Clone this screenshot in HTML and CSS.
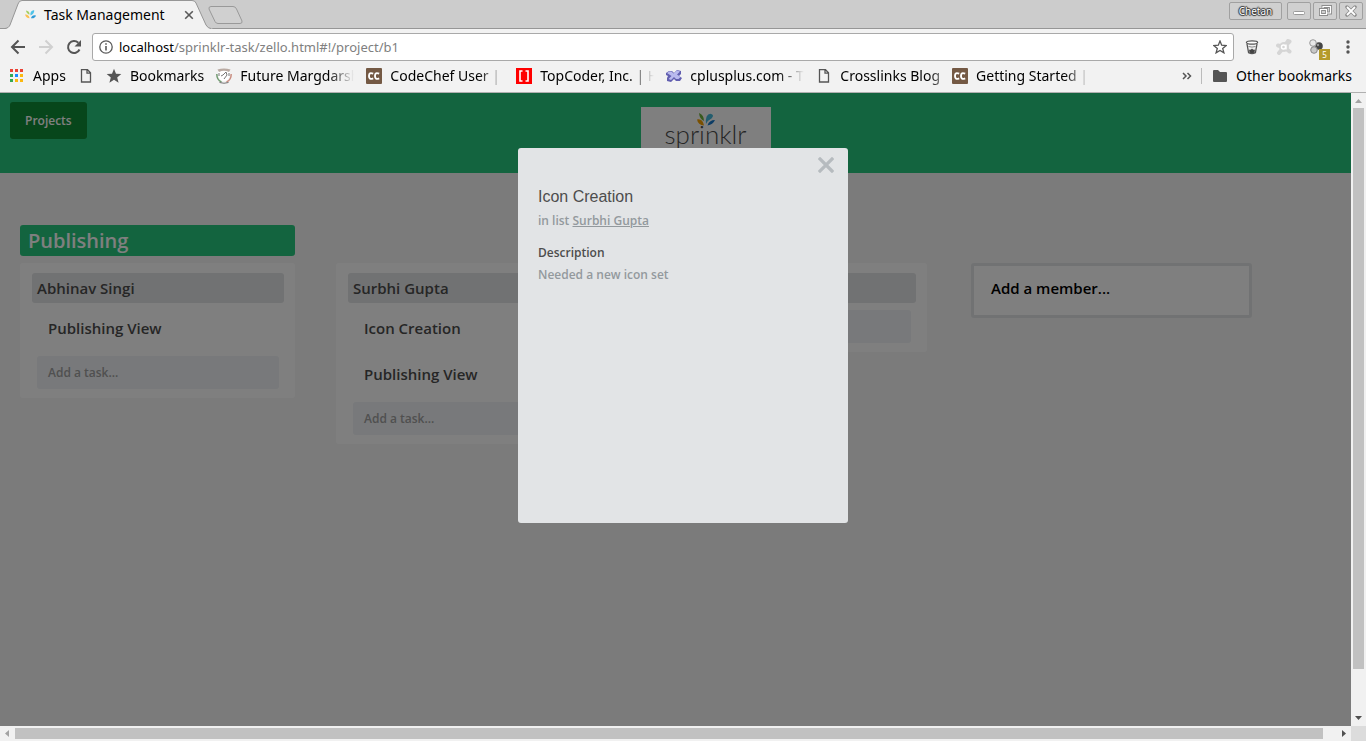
FILE: index.html
```
<!DOCTYPE html>
<html lang="en">
<head>
<meta charset="utf-8">
<title>Task Management</title>
<link rel="stylesheet" href="styles.css">
</head>
<body>
<div class="tabstrip">
  <div class="tab">
    <svg class="tab-shape" viewBox="0 0 208 29" preserveAspectRatio="none" aria-hidden="true"><path d="M0 29 C3 28 4 27 5 25 L13 4 Q14 .5 17 .5 L187 .5 Q190 .5 191 3 L201 25 Q203 28.500 206 28.500 L208 29Z" fill="#f2f2f2"/><path d="M0 28.500 C3 28 4 27 5 25 L13 4 Q14 .5 17 .5 L187 .5 Q190 .5 191 3 L201 25 Q203 28.500 206 28.500" fill="none" stroke="#969696"/></svg>
    <svg class="tab-icon" viewBox="0 0 12 12" aria-hidden="true"><path d="M1 1.500Q5 2 5 6Q2 5.500 1 1.500" fill="#a3cf62"/><path d="M0 6q4-.5 5 4q-4 0-5-4" fill="#fbc04f"/><path d="M6 7Q5 2 10 1q.5 4-4 6" fill="#4fc3e8"/><path d="M6.500 10q1-4 5.500-3q-1 3.500-5.500 3" fill="#2f9bd8"/></svg>
    <span class="tab-title">Task Management</span>
    <button class="tab-close" aria-label="Close tab"><svg width="10" height="10" viewBox="0 0 10 10"><path d="M1.200 1.200 8.800 8.800M8.800 1.200 1.200 8.800" stroke="#5a5a5a" stroke-width="1.600"/></svg></button>
  </div>
  <button class="new-tab" aria-label="New tab"><svg width="36" height="18" viewBox="0 0 36 18"><path d="M3 .5H25Q27.500 .5 28.500 3L34 15Q34.500 17.500 32 17.500H10Q8 17.500 7 15.500L1 3Q.5.5 3 .5Z" fill="#d0d0d0" stroke="#999"/></svg></button>
  <div class="window-controls">
    <button class="user">Chetan</button>
    <button class="win" aria-label="Minimise"><svg width="14" height="12" viewBox="0 0 14 12"><rect x="1.500" y="6.500" width="11" height="3" rx="1" fill="#fff" stroke="#999"/></svg></button>
    <button class="win" aria-label="Restore"><svg width="14" height="12" viewBox="0 0 14 12" fill="none"><path d="M5 3V1.500H12.500V8H9" stroke="#8c8c8c" stroke-width="3"/><path d="M2.500 4.500h6v5h-6z" stroke="#8c8c8c" stroke-width="3"/><path d="M5 3V1.500H12.500V8H9M2.500 4.500h6v5h-6z" stroke="#fff" stroke-width="1.200"/></svg></button>
    <button class="win" aria-label="Close"><svg width="14" height="12" viewBox="0 0 14 12"><path d="M3 2l8 8M11 2l-8 8" stroke="#8c8c8c" stroke-width="3.500" stroke-linecap="round"/><path d="M3 2l8 8M11 2l-8 8" stroke="#fff" stroke-width="1.800"/></svg></button>
  </div>
</div>
<div class="toolbar">
  <div class="nav">
    <button class="icon" aria-label="Back"><svg width="16" height="16" viewBox="0 0 16 16"><path d="M15 8H2.500M8.500 1.500 2 8l6.500 6.500" fill="none" stroke="#555" stroke-width="2"/></svg></button>
    <button class="icon" aria-label="Forward"><svg width="16" height="16" viewBox="0 0 16 16"><path d="M1 8h12.500M7.500 1.500 14 8l-6.500 6.500" fill="none" stroke="#d0d0d0" stroke-width="2"/></svg></button>
    <button class="icon" aria-label="Reload"><svg width="16" height="16" viewBox="0 0 16 16"><path d="M13.500 10.500A6 6 0 1 1 12.300 3.800" fill="none" stroke="#555" stroke-width="2"/><path d="M15 1v6.500H8.500z" fill="#555"/></svg></button>
  </div>
  <div class="omnibox">
    <svg width="14" height="14" viewBox="0 0 14 14" aria-hidden="true"><circle cx="7" cy="7" r="6.200" fill="none" stroke="#5a5a5a" stroke-width="1.300"/><path d="M7 6v4.500M7 3.200v1.600" stroke="#5a5a5a" stroke-width="1.600"/></svg>
    <div class="url">localhost<span>/sprinklr-task/zello.html#!/project/b1</span></div>
    <button class="icon" aria-label="Bookmark this page"><svg width="14" height="14" viewBox="0 0 14 14"><path d="M7 1l1.700 4.200 4.500.3-3.500 2.900 1.200 4.400L7 10.400l-3.900 2.400 1.200-4.400L.8 5.500l4.500-.3z" fill="none" stroke="#555" stroke-width="1.300"/></svg></button>
  </div>
  <div class="extensions">
    <button class="icon" aria-label="Bucket extension"><svg width="16" height="16" viewBox="0 0 16 16"><path d="M3 5l1.600 8.700q3.400 1.600 6.800 0L13 5" fill="#f2f2f2" stroke="#555" stroke-width="1.300"/><ellipse cx="8" cy="3.500" rx="5.600" ry="1.700" fill="#fff" stroke="#555" stroke-width="1.300"/><path d="M4.500 7.500q3.500 1.200 7 0" fill="none" stroke="#888"/><path d="M5 10.500q1.500 1 3-1 1.500 2 3 1l-.5 3q-2.500 1-5 0z" fill="#444"/></svg></button>
    <button class="icon" aria-label="Safety extension"><svg width="16" height="16" viewBox="0 0 16 16"><path d="M8 8L13.500 2.500M8 8L2 6.500M8 8l5.500 4.500M8 8l-5 6M8 8l4-6" stroke="#d5d5d5" stroke-width="4" stroke-linecap="round"/><circle cx="8" cy="8" r="5" fill="#d5d5d5"/><circle cx="7.500" cy="8" r="2" fill="none" stroke="#fff" stroke-width="1.400"/><path d="M10 5.500v5" stroke="#fff" stroke-width="1.400"/></svg></button>
    <button class="icon badge-host" aria-label="Ball extension"><svg width="16" height="16" viewBox="0 0 16 16"><circle cx="11" cy="7" r="3.800" fill="#454545"/><circle cx="5" cy="4" r="3.300" fill="#e8e8e8" stroke="#999"/><circle cx="6" cy="11" r="3.300" fill="#c8c8c8" stroke="#888"/><circle cx="10" cy="6" r="1.200" fill="#999"/></svg><span class="badge">5</span></button>
    <button class="icon" aria-label="Menu"><svg width="16" height="16" viewBox="0 0 16 16" fill="#555"><circle cx="8" cy="3" r="1.700"/><circle cx="8" cy="8" r="1.700"/><circle cx="8" cy="13" r="1.700"/></svg></button>
  </div>
</div>
<nav class="bookmarks">
  <a href="#apps"><svg viewBox="0 0 16 16"><path d="M1 1h3v3H1zM6 1h3v3H6zM11 1h3v3h-3z" fill="#ea4335"/><path d="M1 6h3v3H1zM1 11h3v3H1z" fill="#34a853"/><path d="M6 6h3v3H6z" fill="#1a8cff"/><path d="M11 6h3v3h-3zM6 11h3v3H6zM11 11h3v3h-3z" fill="#fbb80f"/></svg><span>Apps</span></a>
  <a href="#page" aria-label="Untitled page"><svg viewBox="0 0 16 16"><path d="M3.500 1.700h6l3 3V14h-9zM9 1.700V5.200h3.500" fill="none" stroke="#555" stroke-width="1.300"/></svg></a>
  <a href="#bookmarks"><svg viewBox="0 0 16 16"><path d="M8 .8l2 5 5.300.3-4.100 3.400 1.400 5.200L8 11.800l-4.600 2.900 1.400-5.200L.7 6.100 6 5.800z" fill="#555"/></svg><span>Bookmarks</span></a>
  <a href="#future"><svg viewBox="0 0 16 16"><path d="M2 4q0 9 6 9t6-9l-2-2H4z" fill="#fff"/><path d="M1.500 1.500Q8-.5 14.500 1.500L13 4Q8 1.500 3 4z" fill="#b9aaa2"/><path d="M.8 6q0 6 4.700 8" fill="none" stroke="#719a70" stroke-width="1.500"/><path d="M15.200 6q0 6-4.700 8" fill="none" stroke="#c98d80" stroke-width="1.500"/><path d="M5 8l2-1 3-3 1 3-3 4M3.500 14.500q4.500 1.500 9 0M3 5v3M13 5v3" fill="none" stroke="#777"/></svg><span>Future Margdarshan</span></a>
  <a href="#codechef"><svg viewBox="0 0 16 16"><rect width="16" height="16" rx="1" fill="#745944"/><path d="M7.200 5.700Q3 3.800 3 8t4.200 2.300M13.200 5.700Q9 3.800 9 8t4.200 2.300" fill="none" stroke="#fff" stroke-width="1.900"/></svg><span>CodeChef User | CodeChef</span></a>
  <a href="#topcoder"><svg viewBox="0 0 16 16"><path d="M0 0h16v16H0z" fill="#f00"/><path d="M6.500 3H4v10h2.500M9.500 3H12v10H9.500" fill="none" stroke="#fff" stroke-width="1.600"/></svg><span>TopCoder, Inc. | Home</span></a>
  <a href="#cplusplus"><svg viewBox="0 0 16 16"><path d="M0 5l3-2h3l2 2 3-3 4 1v3l-2 2 3 2-2 3h-4l-2-2-3 3-4-1v-3l1-2-2-1z" fill="#625fb0"/><path d="M1 5l2-1.500h2.500l2 2L11 2.500l3 1-3 3 3.500 2.500-2 2H10L8 9l-3 3-2.500-1 3-3z" fill="#b9b9ee"/></svg><span>cplusplus.com - The C++</span></a>
  <a href="#crosslinks"><svg viewBox="0 0 16 16"><path d="M3.500 1.700h6l3 3V14h-9zM9 1.700V5.200h3.500" fill="none" stroke="#555" stroke-width="1.300"/></svg><span>Crosslinks Blog</span></a>
  <a href="#started"><svg viewBox="0 0 16 16"><rect width="16" height="16" rx="1" fill="#745944"/><path d="M7.200 5.700Q3 3.800 3 8t4.200 2.300M13.200 5.700Q9 3.800 9 8t4.200 2.300" fill="none" stroke="#fff" stroke-width="1.900"/></svg><span>Getting Started | Code</span></a>
  <div class="bookmarks-end">
    <button class="icon" aria-label="More bookmarks"><svg width="10" height="8" viewBox="0 0 10 8"><path d="M1 1l3 3-3 3M5.500 1l3 3-3 3" fill="none" stroke="#555" stroke-width="1.500"/></svg></button>
    <a class="other" href="#other"><svg viewBox="0 0 16 16"><path d="M1 3q0-1 1-1h4l2 2h6q1 0 1 1v8q0 1-1 1H2q-1 0-1-1z" fill="#555"/></svg><span>Other bookmarks</span></a>
  </div>
</nav>
<div class="viewport">
  <div class="page">
    <header class="header">
      <button class="projects">Projects</button>
      <div class="logo">
        <svg width="18" height="14" viewBox="0 0 18 14" aria-hidden="true"><path d="M2 0Q7 2 7 8Q2.500 6 2 0" fill="#6fb33b"/><path d="M0 6.500Q5.500 5 7 12.500Q1 12 0 6.500" fill="#f5a000"/><path d="M9 11Q8 1 13.500 .8Q18 2 14.500 5.500Q11 7 9 11" fill="#46badc"/><path d="M10.500 12.500Q12 7 18 7Q16 11.500 10.500 12.500" fill="#1878ca"/></svg>
        <span class="wordmark">sprinklr</span>
      </div>
    </header>
    <main class="board">
      <h1 class="board-title">Publishing</h1>
      <div class="columns">
        <section class="card">
          <h2 class="member">Abhinav Singi</h2>
          <ul class="tasks"><li>Publishing View</li></ul>
          <button class="add-task">Add a task...</button>
        </section>
        <section class="card">
          <h2 class="member">Surbhi Gupta</h2>
          <ul class="tasks"><li>Icon Creation</li><li>Publishing View</li></ul>
          <button class="add-task">Add a task...</button>
        </section>
        <section class="card">
          <h2 class="member"></h2>
          <ul class="tasks"></ul>
          <button class="add-task" aria-label="Add a task"></button>
        </section>
        <button class="add-member">Add a member...</button>
      </div>
    </main>
    <div class="overlay">
      <div class="dialog" role="dialog" aria-labelledby="task-title">
        <button class="close" aria-label="Close"><svg width="16" height="16" viewBox="0 0 16 16"><path d="M2 2l12 12M14 2L2 14" stroke="#b6bbbf" stroke-width="3.200" stroke-linecap="square"/></svg></button>
        <h2 class="task-title" id="task-title">Icon Creation</h2>
        <p class="muted">in list <a href="#list">Surbhi Gupta</a></p>
        <h3 class="label">Description</h3>
        <p class="muted">Needed a new icon set</p>
      </div>
    </div>
  </div>
  <div class="scroll-y">
    <svg viewBox="0 0 15 15"><path d="M4 10h7L7.500 6z" fill="#a3a3a3"/></svg>
    <div class="track"><div class="thumb"></div></div>
    <svg viewBox="0 0 15 15"><path d="M4 5h7L7.500 9z" fill="#505050"/></svg>
  </div>
  <div class="scroll-x">
    <svg viewBox="0 0 15 15"><path d="M9 4v7L5 7.500z" fill="#a3a3a3"/></svg>
    <div class="track"><div class="thumb"></div></div>
    <svg viewBox="0 0 15 15"><path d="M6 4v7l4-3.500z" fill="#505050"/></svg>
  </div>
  <div class="corner"></div>
</div>
</body>
</html>
```
FILE: styles.css
```
* { box-sizing: border-box; }
body {
  margin: 0;
  height: 100vh;
  display: flex;
  flex-direction: column;
  overflow: hidden;
  font-family: "Noto Sans", sans-serif;
  font-size: 14px;
  color: #000;
}
button { margin: 0; padding: 0; border: 0; background: none; font: inherit; color: inherit; }
h1, h2, h3, p, ul { margin: 0; padding: 0; }
svg { display: block; flex: none; }
.icon { display: flex; flex: none; }

/* Tab strip */
.tabstrip {
  display: flex;
  flex: none;
  height: 29px;
  padding: 0 3px 0 5px;
  background: #ccc;
  box-shadow: inset 0 -1px #969696;
}
.tab {
  position: relative;
  display: flex;
  align-items: center;
  width: 208px;
  padding: 0 19px 0 20px;
}
.tab > * { position: relative; }
.tab > .tab-shape { position: absolute; inset: 0; width: 100%; height: 100%; }
.tab-icon { width: 11px; height: 11px; }
.tab-title { flex: 1; margin-left: 8px; line-height: 20px; white-space: nowrap; }
.tab-close { display: flex; }
.new-tab { align-self: center; margin-left: -5px; }
.window-controls { display: flex; align-items: flex-start; gap: 2px; margin-left: auto; padding-top: 2px; }
.user, .win {
  height: 18px;
  display: flex;
  align-items: center;
  justify-content: center;
  border: 1px solid #a0a0a0;
  border-radius: 2px;
  background: #d0d0d0;
}
.user {
  width: 53px;
  margin-right: 3px;
  font-size: 10px;
  color: #fff;
  text-shadow: 0 0 1px #333, 1px 0 1px #333, -1px 0 1px #333, 0 1px 1px #333, 0 -1px 1px #333;
}
.win { width: 24px; }

/* Toolbar */
.toolbar {
  display: flex;
  flex: none;
  align-items: center;
  gap: 10px;
  height: 33px;
  padding: 2px 10px 0;
  background: #f2f2f2;
}
.nav { display: flex; gap: 12px; }
.omnibox {
  display: flex;
  flex: 1;
  align-items: center;
  gap: 6px;
  height: 28px;
  padding: 0 6px;
  border: 1px solid #a9a9a9;
  border-radius: 3px;
  background: #fff;
}
.url { flex: 1; font-size: 13px; line-height: 20px; }
.url span { color: #808080; }
.extensions { display: flex; gap: 16px; }
.badge-host { position: relative; }
.badge {
  position: absolute;
  left: 11px;
  top: 10px;
  width: 11px;
  height: 11px;
  background: #b59b2b;
  color: #fff;
  font-size: 8px;
  line-height: 11px;
}

/* Bookmarks */
.bookmarks {
  display: flex;
  flex: none;
  align-items: center;
  gap: 12px;
  height: 31px;
  padding: 0 14px 2px 9px;
  border-bottom: 1px solid #b0b0b0;
  background: #f2f2f2;
  line-height: 20px;
}
.bookmarks a { display: flex; align-items: center; gap: 8px; color: #000; text-decoration: none; }
.bookmarks a svg { width: 16px; height: 16px; }
.bookmarks span {
  max-width: 114px;
  overflow: hidden;
  white-space: nowrap;
  -webkit-mask-image: linear-gradient(to right, #000 88px, transparent 114px);
  mask-image: linear-gradient(to right, #000 88px, transparent 114px);
}
.bookmarks-end { display: flex; align-items: center; gap: 9px; margin-left: auto; }
.bookmarks .other { padding-left: 10px; border-left: 1px solid #bbb; height: 16px; }
.bookmarks .other span { max-width: none; -webkit-mask-image: none; mask-image: none; }

/* Page area with its scroll bars */
.viewport {
  display: grid;
  grid-template: minmax(0, 1fr) 15px / minmax(0, 1fr) 15px;
  flex: 1;
  min-height: 0;
}
.page {
  position: relative;
  overflow: hidden;
  background: #f6f6f6;
  font-family: "Open Sans", sans-serif;
  font-weight: 600;
  color: #4d4d4d;
}
.header {
  display: grid;
  grid-template-columns: 21fr 130px 19fr;
  align-items: start;
  height: 80px;
  padding: 9px 10px 0;
  background: #27c97e;
}
.projects {
  justify-self: start;
  height: 37px;
  padding: 0 15px;
  border-radius: 3px;
  background: #0e8c36;
  color: #fff;
  font-size: 12px;
}
.logo {
  display: flex;
  flex-direction: column;
  align-items: center;
  height: 50px;
  margin-top: 5px;
  padding-top: 6px;
  background: #fff;
}
.wordmark { font-family: Lato, sans-serif; font-weight: 300; font-size: 26px; line-height: 14px; }
.board { padding: 52px 20px 20px; }
.board-title {
  width: 275px;
  padding: 0 8px;
  border-radius: 3px;
  background: #27c97e;
  color: #fff;
  font-size: 20px;
  font-weight: 600;
  line-height: 31px;
}
.columns { display: flex; align-items: flex-start; gap: 41px; margin-top: 7px; }
.card {
  flex: none;
  width: 275px;
  padding: 10px 11px 9px 12px;
  border-radius: 3px;
  background: #fff;
}
.member {
  height: 30px;
  padding: 0 5px;
  border-radius: 3px;
  background: #e2e4e6;
  font-size: 15px;
  font-weight: 600;
  line-height: 30px;
}
.tasks { margin: 7px 5px 0; list-style: none; font-size: 15px; line-height: 36px; }
.tasks li { padding: 0 11px 10px; }
.add-task {
  display: block;
  width: 242px;
  height: 33px;
  margin: 0 5px;
  padding: 0 11px 1px;
  border-radius: 3px;
  background: #f0f3f6;
  color: #a0a0a0;
  font-size: 12px;
  text-align: left;
}
.add-member {
  flex: none;
  width: 281px;
  height: 55px;
  margin-left: 3px;
  padding: 0 17px 6px;
  border: 3px solid #e2e4e6;
  border-radius: 3px;
  background: #fff;
  color: #000;
  font-size: 15px;
  text-align: left;
}
.overlay {
  position: absolute;
  inset: 0;
  display: flex;
  justify-content: center;
  align-items: flex-start;
  padding: 55px 0 0 15px;
  background: rgba(0, 0, 0, .5);
}
.dialog {
  display: flex;
  flex-direction: column;
  width: 330px;
  min-height: 375px;
  padding: 9px 20px 20px;
  border-radius: 3px;
  background: #e2e4e6;
  font-size: 12px;
  line-height: 20px;
}
.close { align-self: flex-end; margin-right: -6px; }
.task-title {
  margin-top: 12px;
  font-family: "Liberation Sans", Arial, sans-serif;
  font-size: 16px;
  font-weight: 400;
  line-height: 24px;
}
.muted { margin-top: 2px; color: #93999d; }
.muted a { color: inherit; }
.label { margin-top: 12px; font-size: 12px; font-weight: 600; }

/* Scroll bars */
.scroll-y, .scroll-x { display: flex; background: #f1f1f1; }
.scroll-y { flex-direction: column; }
.scroll-y svg, .scroll-x svg { width: 15px; height: 15px; }
.track { display: flex; flex: 1; padding: 0 2px; }
.scroll-x .track { padding: 2px 0; }
.thumb { width: 100%; background: #c1c1c1; }
.scroll-y .thumb { height: 93%; }
.scroll-x .thumb { width: 99%; }
.corner { background: #dcdcdc; }
```
